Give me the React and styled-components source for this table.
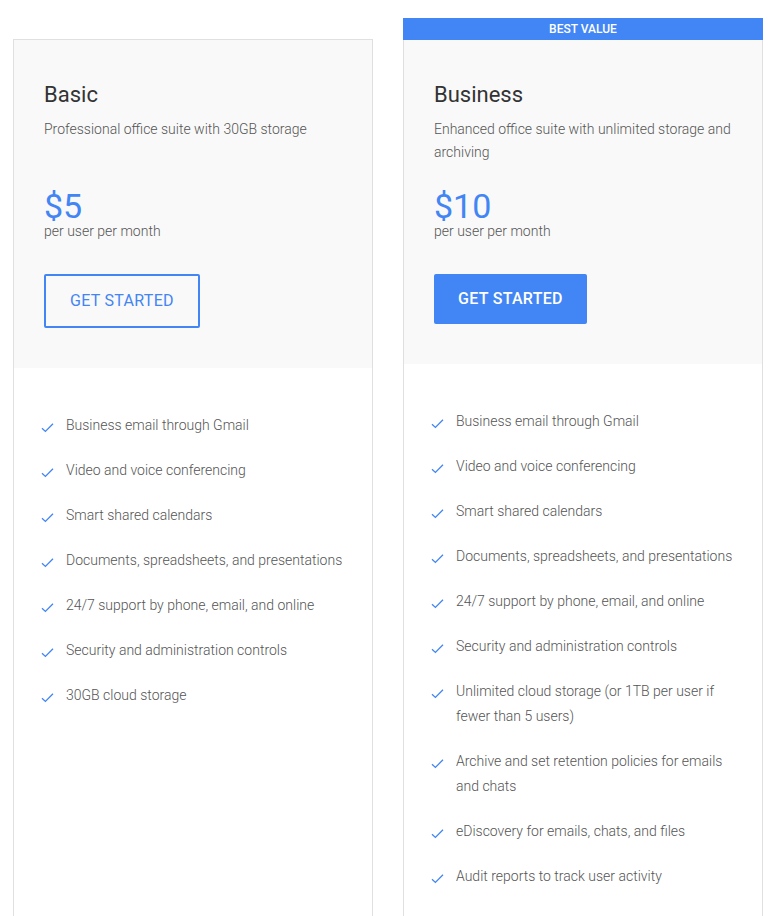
import React from "react";
import styled, { createGlobalStyle } from "styled-components";

const GlobalStyle = createGlobalStyle`
  body {
    margin: 0;
    background: #fff;
    font-family: Roboto, "Liberation Sans", Arial, sans-serif;
  }
`;

const Page = styled.div`
  display: grid;
  grid-template-columns: 360px 360px;
  column-gap: 30px;
  padding: 18px 0 0 13px;
  min-height: 1000px;
`;

const Column = styled.div`
  display: flex;
  flex-direction: column;
  padding-top: ${(p) => (p.$offset ? "21px" : "0")};
`;

const Banner = styled.div`
  height: 22px;
  background-color: #4285f4;
  color: #fff;
  font-size: 12px;
  font-weight: 500;
  line-height: 22px;
  text-align: center;
  text-transform: uppercase;
`;

const Card = styled.div`
  flex: 1;
  display: flex;
  flex-direction: column;
  border: 1px solid #e0e0e0;
  border-top: ${(p) => (p.$featured ? "none" : "1px solid #e0e0e0")};
  background-color: #fff;
`;

const Header = styled.div`
  background-color: #f9f9f9;
  padding: 41px 30px 40px;
`;

const Title = styled.h2`
  margin: 0 0 9px;
  font-size: 22px;
  font-weight: 400;
  line-height: 28px;
  color: #333;
`;

const Desc = styled.p`
  margin: 0;
  min-height: 46px;
  font-size: 14px;
  font-weight: 300;
  line-height: 23px;
  color: #555;
`;

const Price = styled.div`
  margin-top: 25px;
  font-size: 34px;
  font-weight: 400;
  line-height: 34px;
  color: #4285f4;
`;

const Per = styled.div`
  font-size: 14px;
  font-weight: 300;
  line-height: 16px;
  color: #555;
`;

const Button = styled.button`
  margin-top: 35px;
  padding: 16px 24px;
  font-family: inherit;
  font-size: 16px;
  line-height: 18px;
  letter-spacing: 0.3px;
  text-transform: uppercase;
  border-radius: 2px;
  cursor: pointer;
  border: ${(p) => (p.$primary ? "none" : "2px solid #4285f4")};
  background-color: ${(p) => (p.$primary ? "#4285f4" : "transparent")};
  color: ${(p) => (p.$primary ? "#fff" : "#4285f4")};
  font-weight: ${(p) => (p.$primary ? 500 : 400)};
`;

const List = styled.ul`
  list-style: none;
  margin: 0;
  padding: 45px 28px 40px 27px;
`;

const Item = styled.li`
  display: flex;
  align-items: flex-start;
  gap: 12px;
  margin-bottom: 20px;
  font-size: 14px;
  font-weight: 300;
  line-height: 25px;
  color: #555;
`;

const Check = styled.svg`
  flex: none;
  width: 13px;
  height: 13px;
  margin-top: 8px;
`;

const CheckIcon = () => (
  <Check viewBox="0 0 13 13" fill="none">
    <path d="M1 7.2 L4.4 10.4 L12 2.8" stroke="#4285f4" strokeWidth="1.3" />
  </Check>
);

const plans = [
  {
    name: "Basic",
    desc: "Professional office suite with 30GB storage",
    price: "$5",
    features: [
      "Business email through Gmail",
      "Video and voice conferencing",
      "Smart shared calendars",
      "Documents, spreadsheets, and presentations",
      "24/7 support by phone, email, and online",
      "Security and administration controls",
      "30GB cloud storage",
    ],
  },
  {
    name: "Business",
    desc: "Enhanced office suite with unlimited storage and archiving",
    price: "$10",
    featured: true,
    features: [
      "Business email through Gmail",
      "Video and voice conferencing",
      "Smart shared calendars",
      "Documents, spreadsheets, and presentations",
      "24/7 support by phone, email, and online",
      "Security and administration controls",
      "Unlimited cloud storage (or 1TB per user if fewer than 5 users)",
      "Archive and set retention policies for emails and chats",
      "eDiscovery for emails, chats, and files",
      "Audit reports to track user activity",
    ],
  },
];

const App = () => {
  return (
    <>
      <GlobalStyle />
      <Page>
        {plans.map((plan) => (
          <Column key={plan.name} $offset={!plan.featured}>
            {plan.featured ? <Banner>Best value</Banner> : null}
            <Card $featured={plan.featured}>
              <Header>
                <Title>{plan.name}</Title>
                <Desc>{plan.desc}</Desc>
                <Price>{plan.price}</Price>
                <Per>per user per month</Per>
                <Button $primary={plan.featured}>Get started</Button>
              </Header>
              <List>
                {plan.features.map((f) => (
                  <Item key={f}>
                    <CheckIcon />
                    <span>{f}</span>
                  </Item>
                ))}
              </List>
            </Card>
          </Column>
        ))}
      </Page>
    </>
  );
};

export default App;
